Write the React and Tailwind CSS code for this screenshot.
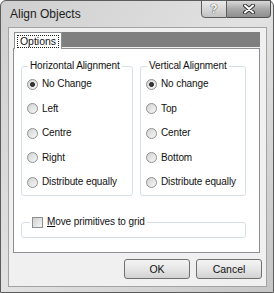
import React from "react";

const font = { fontFamily: '"Liberation Sans", Arial, sans-serif' };

function Radio({ label, checked }) {
  return (
    <div className="flex items-center h-[14px] pl-[5px]">
      <span className="w-[11px] h-[11px] rounded-full border border-[#8e8f8f] bg-gradient-to-br from-[#d2d2d2] to-[#f8f8f8] flex items-center justify-center">
        {checked && <span className="w-[5px] h-[5px] rounded-full bg-[#3a3a3a] border border-[#1e1e1e]" />}
      </span>
      <span className="ml-[4px] text-[10px] tracking-[-0.1px] text-[#111] leading-none">{label}</span>
    </div>
  );
}

function Group({ title, items, className }) {
  return (
    <fieldset className={"border border-[#d5dfe5] rounded-[3px] pb-[6px] " + className}>
      <legend className="ml-[6px] px-[2px] text-[10px] tracking-[-0.1px] leading-[12px] text-[#111]">{title}</legend>
      <div className="flex flex-col gap-[10.5px] pt-[5px]">
        {items.map((it, i) => (
          <Radio key={it} label={it} checked={i === 0} />
        ))}
      </div>
    </fieldset>
  );
}

function Button({ children }) {
  return (
    <button className="w-[66px] h-[20px] rounded-[3px] border border-[#707070] bg-gradient-to-b from-[#f4f4f4] via-[#e6e6e6] to-[#d2d2d2] text-[10.5px] text-[#111] leading-none">
      {children}
    </button>
  );
}

export default function App() {
  return (
    <div className="w-[274px] h-[293px] bg-white" style={font}>
      <div className="w-[274px] h-[293px] flex flex-col rounded-t-[6px] border border-[#5c5c5c] bg-gradient-to-br from-[#cfcfcf] via-[#e2e2e2] to-[#c6c6c6]">
        <div className="h-[26px] flex items-start pl-[9px] pr-[2px] shrink-0">
          <span className="mt-[7px] text-[12px] leading-none text-[#1c1c1c]">Align Objects</span>
          <div className="ml-auto flex -mt-px">
            <div className="w-[26px] h-[18px] rounded-bl-[4px] border border-[#5e5e5e] bg-gradient-to-b from-[#eaeaea] via-[#d6d6d6] to-[#c2c2c2] flex items-center justify-center">
              <span className="text-[12px] font-bold leading-none text-white [text-shadow:0_0_1px_#333,0_0_1px_#333]">?</span>
            </div>
            <div className="w-[44px] h-[18px] rounded-br-[4px] border border-l-0 border-[#4e4e4e] bg-gradient-to-b from-[#d8d8d8] via-[#a8a8a8] to-[#8e8e8e] flex items-center justify-center">
              <svg width="14" height="10" viewBox="0 0 14 10">
                <path d="M3 1.5 L11 8.5 M11 1.5 L3 8.5" stroke="#333" strokeWidth="4" strokeLinecap="round" />
                <path d="M3 1.5 L11 8.5 M11 1.5 L3 8.5" stroke="#fff" strokeWidth="2" strokeLinecap="round" />
              </svg>
            </div>
          </div>
        </div>

        <div className="ml-[7px] mr-[6px] mb-[5px] flex-1 bg-[#f0f0f0] border border-[#a3a3a3] flex flex-col">
          <div className="mt-[4px] ml-[4px] mr-[6px] flex items-start h-[16px]">
            <div className="ml-[1px] w-[48px] h-[17px] bg-white border border-b-0 border-[#8e8f94] relative z-10 flex items-center justify-center">
              <span className="border border-dotted border-[#222] px-[2px] text-[10.5px] leading-[11px] text-[#111]">Options</span>
            </div>
            <div className="flex-1 h-[15px] bg-[#7f7f7f]" />
          </div>
          <div className="ml-[4px] mr-[6px] h-[205px] bg-white border border-[#8e8f94] pt-[11px] pl-[7px]">
            <div className="flex gap-[7px]">
              <Group className="w-[112px]" title="Horizontal Alignment" items={["No Change", "Left", "Centre", "Right", "Distribute equally"]} />
              <Group className="w-[106px]" title="Vertical Alignment" items={["No change", "Top", "Center", "Bottom", "Distribute equally"]} />
            </div>
            <fieldset className="mt-[20px] w-[225px] border border-[#d5dfe5] rounded-[3px]">
              <legend className="ml-[8px] px-[2px] flex items-center">
                <span className="w-[11px] h-[11px] border border-[#8e8f8f] bg-gradient-to-br from-[#d0d0d0] to-[#f6f6f6]" />
                <span className="ml-[4px] text-[10px] tracking-[-0.1px] leading-[12px] text-[#111]">
                  <span className="underline">M</span>ove primitives to grid
                </span>
              </legend>
              <div className="h-[9px]" />
            </fieldset>
          </div>
          <div className="mt-[6px] flex justify-end gap-[6px] mr-[4px]">
            <Button>OK</Button>
            <Button>Cancel</Button>
          </div>
        </div>
      </div>
    </div>
  );
}
